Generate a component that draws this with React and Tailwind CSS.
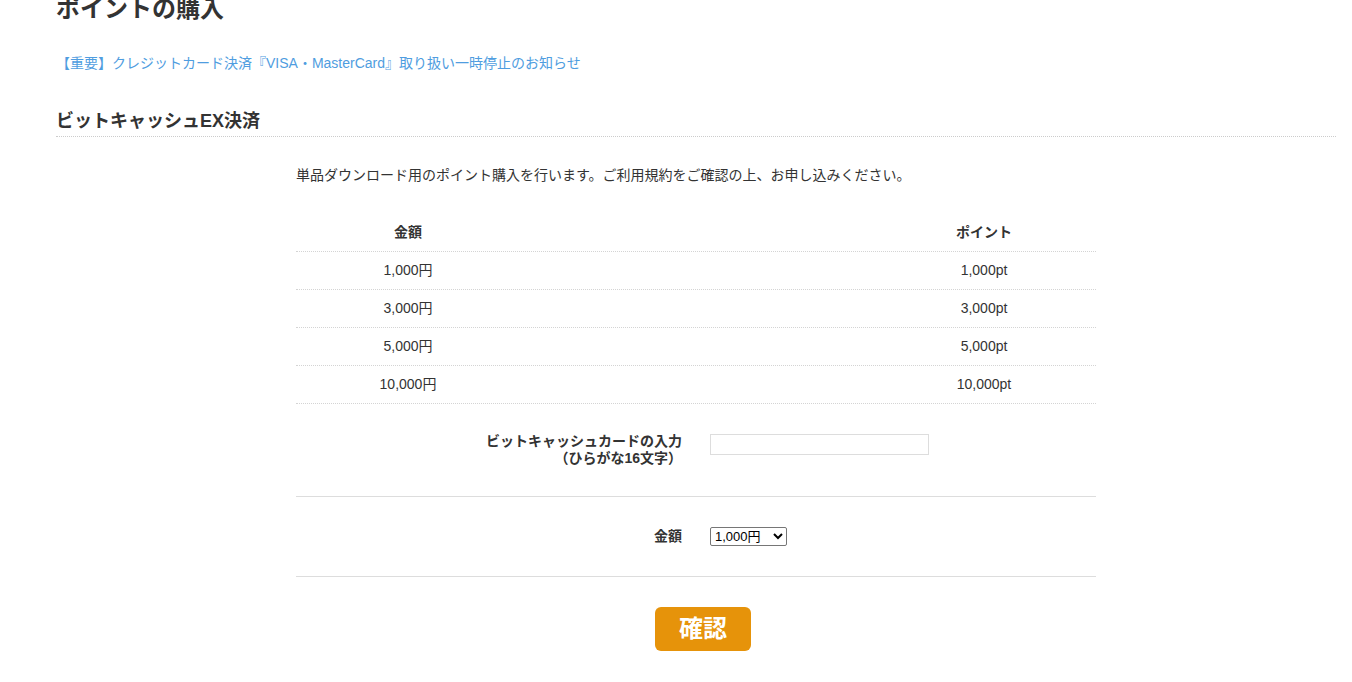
import { useState } from 'react';

const FONT = { fontFamily: '"Liberation Sans", "Noto Sans CJK JP", sans-serif' };

const rates = [
  { yen: '1,000円', pt: '1,000pt' },
  { yen: '3,000円', pt: '3,000pt' },
  { yen: '5,000円', pt: '5,000pt' },
  { yen: '10,000円', pt: '10,000pt' },
];

export default function App() {
  const [code, setCode] = useState('');
  const [amount, setAmount] = useState('1000');

  return (
    <div className="min-h-screen bg-white text-[#333] pl-[56px] pr-4" style={FONT}>
      {/* page title */}
      <h1 className="-mt-[3px] text-[24px] leading-[24px] font-bold text-[#333]">ポイントの購入</h1>

      <div className="mt-[32px] text-[14px] leading-[20px]">
        <a href="#" className="text-[#4f9de0]">
          【重要】クレジットカード決済『VISA・MasterCard』取り扱い一時停止のお知らせ
        </a>
      </div>

      {/* section */}
      <h2 className="mt-[36px] pb-[3px] text-[18px] leading-[24px] font-bold border-b border-dotted border-[#ccc]">
        ビットキャッシュEX決済
      </h2>

      <div className="w-[800px] ml-[240px]">
        <p className="mt-[28px] text-[14px] leading-[20px]">
          単品ダウンロード用のポイント購入を行います。ご利用規約をご確認の上、お申し込みください。
        </p>

        {/* rate table */}
        <div className="mt-[29px] text-[14px]">
          <div className="grid grid-cols-[224px_1fr_224px] h-[38px] items-center font-bold border-b border-dotted border-[#d4d4d4]">
            <div className="text-center">金額</div>
            <div></div>
            <div className="text-center">ポイント</div>
          </div>
          {rates.map((r) => (
            <div
              key={r.yen}
              className="grid grid-cols-[224px_1fr_224px] h-[38px] items-center border-b border-dotted border-[#d4d4d4]"
            >
              <div className="text-center">{r.yen}</div>
              <div></div>
              <div className="text-center">{r.pt}</div>
            </div>
          ))}
        </div>

        {/* form */}
        <div className="grid grid-cols-2 h-[93px] items-center border-b border-[#ddd] text-[14px]">
          <div className="pr-[14px] text-right font-bold leading-[17px]">
            ビットキャッシュカードの入力
            <br />
            （ひらがな16文字）
          </div>
          <div className="pl-[14px] self-start pt-[30px]">
            <input
              value={code}
              onChange={(e) => setCode(e.target.value)}
              className="block w-[219px] h-[21px] border border-[#ddd] px-1 text-[13px]"
            />
          </div>
        </div>
        <div className="grid grid-cols-2 h-[80px] items-center border-b border-[#ddd] text-[14px]">
          <div className="pr-[14px] text-right font-bold">金額</div>
          <div className="pl-[14px]">
            <select
              value={amount}
              onChange={(e) => setAmount(e.target.value)}
              className="block w-[77px] h-[19px] border border-[#767676] rounded-[2px] text-[13px] text-black"
              style={{ fontFamily: '"Liberation Sans", "Noto Sans CJK JP", sans-serif' }}
            >
              <option value="1000">1,000円</option>
              <option value="3000">3,000円</option>
              <option value="5000">5,000円</option>
              <option value="10000">10,000円</option>
            </select>
          </div>
        </div>

        <div className="flex justify-center pt-[30px] pl-[14px]">
          <button className="w-[96px] h-[44px] rounded-[6px] bg-[#e6930a] text-white text-[24px] font-bold leading-none">
            確認
          </button>
        </div>
      </div>
    </div>
  );
}
